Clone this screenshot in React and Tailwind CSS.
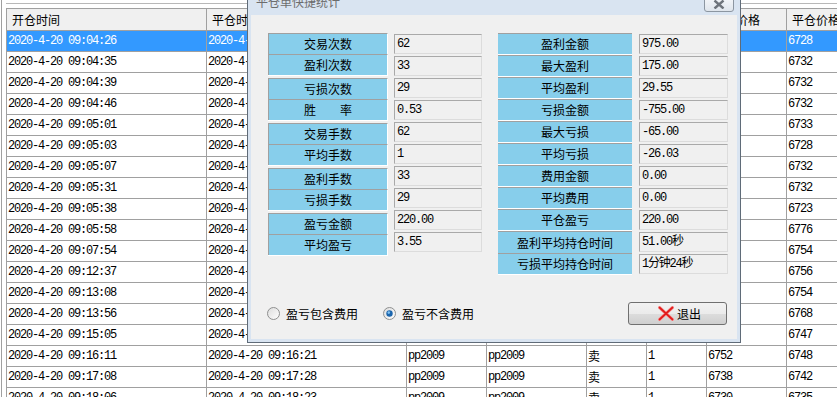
import React from "react";

const MONO = "font-['Liberation_Mono','Noto_Sans_CJK_SC',monospace] text-[12px] tracking-[-1.2px]";
const CJK = "font-['Noto_Sans_CJK_SC',sans-serif] text-[12px]";

const colW = ["w-[200px]", "w-[200px]", "w-[80px]", "w-[100px]", "w-[60px]", "w-[60px]", "w-[80px]", "w-[80px]"];
const headers = ["开仓时间", "平仓时间", "合约", "品种", "买卖", "手数", "开仓价格", "平仓价格"];

const trades = [
  ["09:04:26", "09:04:31", "6726", "6728"],
  ["09:04:35", "09:04:41", "6731", "6732"],
  ["09:04:39", "09:04:52", "6730", "6732"],
  ["09:04:46", "09:04:58", "6733", "6732"],
  ["09:05:01", "09:05:09", "6735", "6733"],
  ["09:05:03", "09:05:12", "6730", "6728"],
  ["09:05:07", "09:05:20", "6731", "6732"],
  ["09:05:31", "09:05:44", "6734", "6732"],
  ["09:05:38", "09:05:50", "6726", "6723"],
  ["09:05:58", "09:06:15", "6770", "6776"],
  ["09:07:54", "09:08:10", "6758", "6754"],
  ["09:12:37", "09:12:49", "6752", "6756"],
  ["09:13:08", "09:13:20", "6757", "6754"],
  ["09:13:56", "09:14:08", "6763", "6768"],
  ["09:15:05", "09:15:33", "6750", "6747"],
  ["09:16:11", "09:16:21", "6752", "6748"],
  ["09:17:08", "09:17:28", "6738", "6742"],
  ["09:18:06", "09:18:23", "6730", "6735"],
];

const leftGroups = [
  [["交易次数", "62"], ["盈利次数", "33"]],
  [["亏损次数", "29"], ["胜率", "0.53"]],
  [["交易手数", "62"], ["平均手数", "1"]],
  [["盈利手数", "33"], ["亏损手数", "29"]],
  [["盈亏金额", "220.00"], ["平均盈亏", "3.55"]],
];

const rightRows = [
  ["盈利金额", "975.00"],
  ["最大盈利", "175.00"],
  ["平均盈利", "29.55"],
  ["亏损金额", "-755.00"],
  ["最大亏损", "-65.00"],
  ["平均亏损", "-26.03"],
  ["费用金额", "0.00"],
  ["平均费用", "0.00"],
  ["平仓盈亏", "220.00"],
  ["盈利平均持仓时间", "51.00秒"],
  ["亏损平均持仓时间", "1分钟24秒"],
];

const ValueBox = ({ children, w }) => (
  <div className={`${w} h-[20px] shrink-0 flex items-center pl-[2px] bg-[#f0f0f0] border border-t-[#a9a9a9] border-l-[#a9a9a9] border-b-[#dcdcdc] border-r-[#dcdcdc] text-black whitespace-nowrap ${MONO}`}>
    {children}
  </div>
);

const Radio = ({ checked }) => (
  <svg width="13" height="13" viewBox="0 0 13 13">
    <defs>
      <linearGradient id={checked ? "rg1" : "rg0"} x1="0" y1="0" x2="1" y2="1">
        <stop offset="0" stopColor="#dcdcdc" />
        <stop offset="1" stopColor="#ffffff" />
      </linearGradient>
    </defs>
    <circle cx="6.5" cy="6.5" r="6" fill={`url(#${checked ? "rg1" : "rg0"})`} stroke="#8e8f8f" />
    {checked && <circle cx="6.5" cy="6.5" r="3.2" fill="#1b65ad" />}
    {checked && <circle cx="5.8" cy="5.6" r="1.3" fill="#7ec1f2" />}
  </svg>
);

const RedX = () => (
  <svg width="16" height="15" viewBox="0 0 16 15">
    <path d="M1.5 1.5 L14.5 13.5 M14.5 1.5 L1.5 13.5" stroke="#f5a0a0" strokeWidth="3.2" strokeLinecap="round" />
    <path d="M1.5 1.5 L14.5 13.5 M14.5 1.5 L1.5 13.5" stroke="#e21b1b" strokeWidth="1.8" strokeLinecap="round" />
  </svg>
);

export default function App() {
  return (
    <div className="relative w-[837px] h-[397px] overflow-hidden bg-white">
      {/* background table */}
      <div className="flex h-full">
        <div className="w-px shrink-0 bg-[#a0a0a0] ml-px" />
        <div className="w-[4px] shrink-0" />
        <div className="flex-1 min-w-0 flex flex-col">
          <div className="h-[3px] shrink-0" />
          <div className="h-px shrink-0 bg-[#b8b8b8]" />
          <div className="h-[4px] shrink-0" />
          <div className="flex h-[23px] shrink-0 border-y border-[#a0a0a0] border-l bg-[#f0f0f0]">
            {headers.map((h, i) => (
              <div key={i} className={`${colW[i]} shrink-0 border-r border-[#a0a0a0] flex items-center pl-[5px] text-black whitespace-nowrap ${CJK}`}>
                {h}
              </div>
            ))}
          </div>
          {trades.map((t, r) => (
            <div key={r} className={`flex h-[21px] shrink-0 border-b border-l border-[#a0a0a0] ${r === 0 ? "bg-[#3399ff] text-white" : "text-black"}`}>
              {[
                `2020-4-20 ${t[0]}`,
                `2020-4-20 ${t[1]}`,
                "pp2009",
                "pp2009",
                "卖",
                "1",
                t[2],
                t[3],
              ].map((v, i) => (
                <div key={i} className={`${colW[i]} shrink-0 border-r border-[#a0a0a0] flex items-center pl-[1px] whitespace-nowrap ${i === 4 ? CJK : MONO}`}>
                  {v}
                </div>
              ))}
            </div>
          ))}
        </div>
      </div>

      {/* dialog */}
      <div className="absolute left-[247px] top-0 w-[494px] h-[343px] border-x border-b border-[#5f6b78] bg-[#d9e4f1] flex flex-col px-[3px] pb-[3px]">
        <div className="relative h-[15px] shrink-0">
          <div className={`absolute left-[5px] top-[-4px] leading-[12px] text-[#6d6d6d] whitespace-nowrap ${CJK}`}>平仓单快捷统计</div>
          <div className="absolute left-[453px] top-[-3px] w-[30px] h-[15px] rounded-b-[3px] border border-[#8c96a1] bg-[linear-gradient(#f4f6f9,#dfe5ec)] flex items-center justify-center">
            <svg width="12" height="9" viewBox="0 0 12 9">
              <path d="M1.5 0.5 L10.5 8.5 M10.5 0.5 L1.5 8.5" stroke="#6e747b" strokeWidth="2.4" />
            </svg>
          </div>
        </div>
        <div className="flex-1 bg-[#f0f0f0] flex flex-col pl-[17px] pt-[18px]">
          <div className="flex gap-[16px] h-[242px] shrink-0">
            {/* left stats */}
            <div className="flex gap-[6px]">
              <div className="flex flex-col gap-[2px] w-[120px]">
                {leftGroups.map((g, gi) => (
                  <div key={gi} className="flex flex-col border-b border-white">
                    {g.map(([label], li) => (
                      <div key={li} className={`h-[21px] bg-[#87ceeb] border-t border-l border-t-[#a0a0a0] border-l-[#a0a0a0] border-r border-r-white flex items-center justify-center text-black ${CJK}`}>
                        {label === "胜率" ? (
                          <span className="w-[48px] flex justify-between"><span>胜</span><span>率</span></span>
                        ) : (
                          label
                        )}
                      </div>
                    ))}
                  </div>
                ))}
              </div>
              <div className="flex flex-col gap-[2px] mt-px">
                {leftGroups.flat().map(([, v], i) => (
                  <ValueBox key={i} w="w-[88px]">{v}</ValueBox>
                ))}
              </div>
            </div>
            {/* right stats */}
            <div className="flex gap-[7px]">
              <div className="flex flex-col w-[134px]">
                {rightRows.map(([label], i) => (
                  <div key={i} className={`h-[22px] shrink-0 bg-[#87ceeb] border-t border-t-[#a0a0a0] ${i === 9 ? "" : "border-b border-b-white"} flex items-center justify-center text-black whitespace-nowrap ${CJK}`}>
                    {label}
                  </div>
                ))}
              </div>
              <div className="flex flex-col gap-[2px] mt-px">
                {rightRows.map(([, v], i) => (
                  <ValueBox key={i} w="w-[89px]">{v}</ValueBox>
                ))}
              </div>
            </div>
          </div>
          <div className="flex items-center mt-[27px] h-[23px] shrink-0 pr-[10px]">
            <div className="flex items-center gap-[6px] ml-[-1px]">
              <Radio checked={false} />
              <span className={`text-black ${CJK}`}>盈亏包含费用</span>
            </div>
            <div className="flex items-center gap-[6px] ml-[25px]">
              <Radio checked />
              <span className={`text-black ${CJK}`}>盈亏不含费用</span>
            </div>
            <div className="ml-auto w-[99px] h-[23px] rounded-[3px] border border-[#707070] bg-[linear-gradient(#f2f2f2_0%,#ebebeb_50%,#dddddd_50%,#cfcfcf_100%)] flex items-center justify-center gap-[3px] pl-[4px]">
              <RedX />
              <span className={`text-black ${CJK}`}>退出</span>
            </div>
          </div>
        </div>
      </div>
    </div>
  );
}
